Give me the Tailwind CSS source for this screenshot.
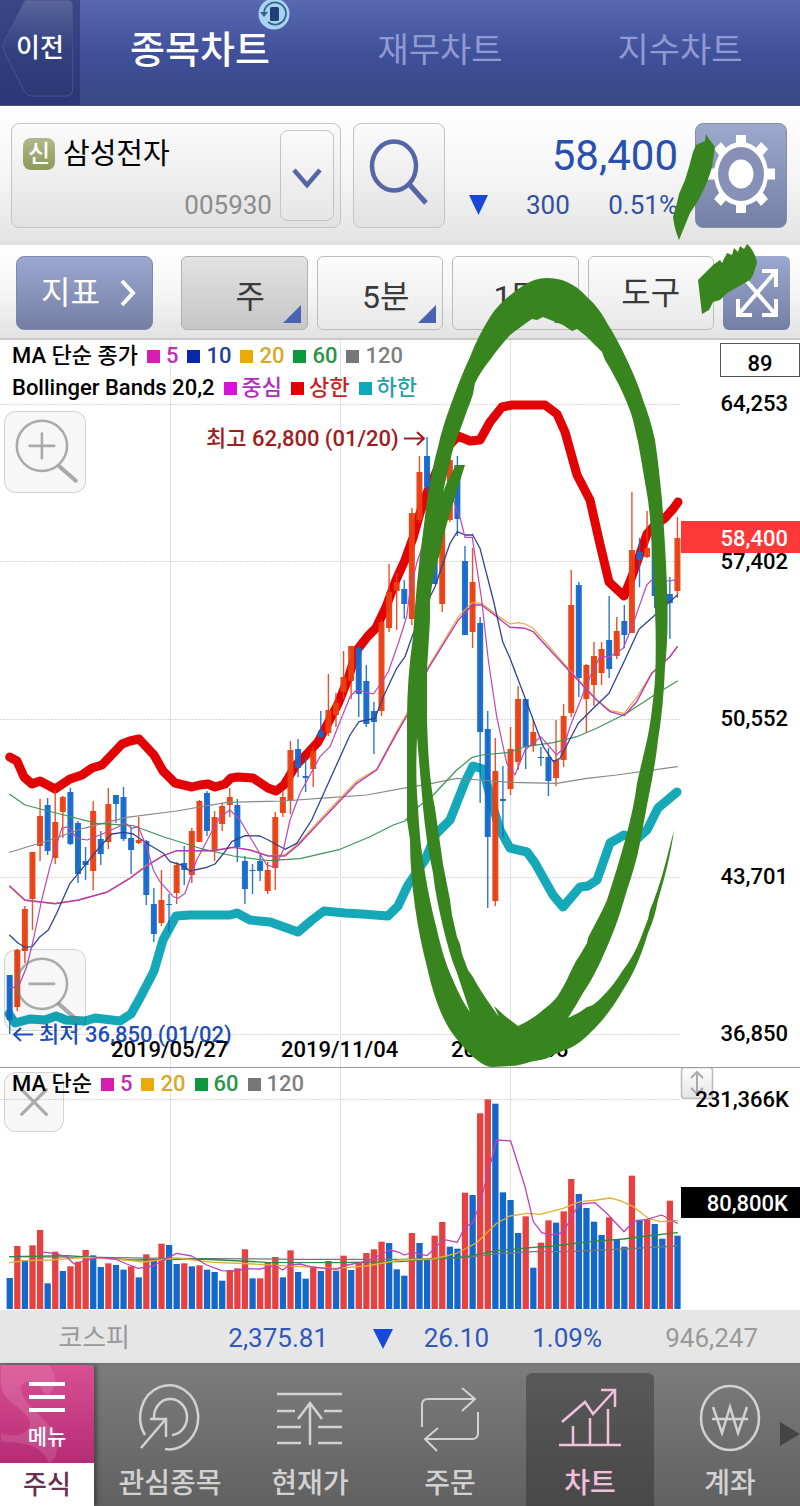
<!DOCTYPE html>
<html lang="ko">
<head>
<meta charset="utf-8">
<meta name="viewport" content="width=device-width, initial-scale=1">
<title>종목차트 - 삼성전자</title>
<script src="https://cdn.jsdelivr.net/npm/@tailwindcss/browser@4"></script>
</head>
<body class="bg-white font-['Roboto','Noto_Sans_CJK_KR',sans-serif] text-black">
<div class="relative w-full overflow-hidden">

  <!-- Top tabs -->
  <header class="flex h-[106px] border-b border-[#4c5674] bg-linear-to-b from-[#5a68b4] via-[#40509a] to-[#384984]">
    <button type="button" class="relative w-20 shrink-0 bg-linear-to-b from-[#3a4785] via-[#303f80] to-[#2b3874] text-white">
      <svg class="absolute inset-0 size-full" viewBox="0 0 80 106" aria-hidden="true">
        <defs><linearGradient id="backFill" x1="0" y1="0" x2="0" y2="1"><stop offset="0" stop-color="#5a659c"/><stop offset=".5" stop-color="#33427f"/><stop offset="1" stop-color="#2b3975"/></linearGradient></defs>
        <path d="M25 0H68Q73 0 73 6V90Q73 97 66 97H32Q27 97 24 92L4 52Q1 46 4 41Z" fill="url(#backFill)" stroke="#46548f" stroke-width="1"/>
      </svg>
      <span class="relative block pb-2 text-[26px] font-medium">이전</span>
    </button>
    <nav class="grid flex-1 grid-cols-3 pb-1">
      <button type="button" class="relative text-[38px] font-medium text-white">종목차트
        <svg class="absolute top-0 left-[178px] size-8" viewBox="0 0 32 32" aria-hidden="true">
          <circle cx="16" cy="14" r="15.5" fill="#a9d4f0"/>
          <path d="M6 13A11 11 0 1 1 10 22" fill="none" stroke="#34618f" stroke-width="1.8"/>
          <path d="M2 12L6 17L10 12Z" fill="#34618f"/>
          <rect x="12" y="7" width="9" height="14" rx="1.5" fill="#223f7c"/>
        </svg>
      </button>
      <button type="button" class="text-[34px] text-[#8f9ad0]">재무차트</button>
      <button type="button" class="text-[34px] text-[#8f9ad0]">지수차트</button>
    </nav>
  </header>

  <!-- Stock selector and price -->
  <section class="flex h-[139px] items-start border-b-4 border-[#e0e0e0] bg-linear-to-b from-white via-[#f6f6f6] to-[#e4e4e4] pt-[17px] pr-[13px] pl-[11px]">
    <div class="flex h-[105px] w-[330px] gap-2 rounded-lg border border-[#c4c4c4] bg-linear-to-b from-[#fbfbfb] to-[#e2e2e2] p-[6px] pl-[11px]">
      <div class="flex flex-1 flex-col justify-between">
        <div class="flex items-center gap-2 pt-1">
          <span class="flex size-8 items-center justify-center rounded-lg bg-linear-to-b from-[#b0b88a] to-[#8c9a58] text-2xl font-medium text-white">신</span>
          <span class="text-[29px] leading-10">삼성전자</span>
        </div>
        <span class="text-right text-[26px] leading-8 text-[#8c8c8c]">005930</span>
      </div>
      <button type="button" aria-label="종목 목록" class="flex w-[54px] items-center justify-center rounded-lg border border-[#c4c4c4] bg-linear-to-b from-[#fafafa] to-[#e6e6e6]">
        <svg class="mt-1 h-6 w-8" viewBox="0 0 32 24" fill="none" stroke="#5565a5" stroke-width="4.500" aria-hidden="true"><path d="M3 4L16 19L29 4"/></svg>
      </button>
    </div>
    <button type="button" aria-label="검색" class="ml-3 flex h-[105px] w-[92px] items-center justify-center rounded-lg border border-[#c4c4c4] bg-linear-to-b from-[#fbfbfb] to-[#e2e2e2]">
      <svg class="mb-2 h-[66px] w-[60px]" viewBox="0 0 60 66" fill="none" stroke="#5565a5" aria-hidden="true"><ellipse cx="25" cy="27" rx="22" ry="24.500" stroke-width="4.500"/><path d="M40 45L57 64" stroke-width="5"/></svg>
    </button>
    <div class="flex flex-1 flex-col pr-[17px] pl-6 text-right text-[#2a50ae]">
      <span class="pt-1 text-[42px] leading-[58px]">58,400</span>
      <div class="flex items-center text-[26px] leading-10 text-[#3050a0]">
        <svg class="h-5 w-[19px]" viewBox="0 0 19 20" aria-hidden="true"><path d="M0 0H19L9.500 20Z" fill="#1848d8"/></svg>
        <span class="pl-[38px]">300</span>
        <span class="flex-1">0.51%</span>
      </div>
    </div>
    <button type="button" aria-label="설정" class="h-[105px] w-[92px] rounded-lg border border-[#858cab] bg-linear-to-b from-[#9ca8cc] to-[#7580a6]">
      <svg class="mx-auto mb-1 h-[80px] w-[70px]" viewBox="-35 -40 70 80" aria-hidden="true">
        <g fill="#fff">
          <rect x="-5" y="-39" width="10" height="78"/>
          <rect x="-34" y="-5.500" width="68" height="11"/>
          <path d="M-27 -25L-20 -32L27 25L20 32Z"/><path d="M27 -25L20 -32L-27 25L-20 32Z"/>
          <ellipse rx="27" ry="32"/>
        </g>
        <ellipse rx="23" ry="27" fill="#8791b7"/>
        <ellipse rx="12.500" ry="14.500" fill="#fff"/>
      </svg>
    </button>
  </section>

  <!-- Chart toolbar -->
  <section class="flex h-[95px] items-start gap-[9px] border-b-2 border-[#c8c8c8] bg-linear-to-b from-white via-[#f6f6f6] to-[#e2e2e2] pt-[11px] pr-[10px] pl-4 text-[32px] text-[#3a3a3a]">
    <button type="button" class="mr-[19px] flex h-[74px] w-[137px] items-center justify-center gap-5 rounded-lg border border-[#7f89b0] bg-linear-to-b from-[#9ba8cf] to-[#757fa5] pl-2 text-white">지표
      <svg class="h-7 w-4" viewBox="0 0 16 28" fill="none" stroke="#fff" stroke-width="4" aria-hidden="true"><path d="M2 2L13 14L2 26"/></svg>
    </button>
    <div class="grid flex-1 grid-cols-4 gap-[9px]">
      <button type="button" class="relative h-[74px] rounded-md border border-[#b0b0b0] bg-linear-to-b from-[#e2e2e2] to-[#c6c6c6] pt-2 pl-3">주
        <svg class="absolute right-[6px] bottom-[6px] size-[18px]" viewBox="0 0 18 18" aria-hidden="true"><path d="M18 0V18H0Z" fill="#4a62b2"/></svg>
      </button>
      <button type="button" class="relative h-[74px] rounded-md border border-[#bcbcbc] bg-linear-to-b from-[#fcfcfc] to-[#e8e8e8] pt-2 pl-3">5분
        <svg class="absolute right-[6px] bottom-[6px] size-[18px]" viewBox="0 0 18 18" aria-hidden="true"><path d="M18 0V18H0Z" fill="#4a62b2"/></svg>
      </button>
      <button type="button" class="relative h-[74px] rounded-md border border-[#bcbcbc] bg-linear-to-b from-[#fcfcfc] to-[#e8e8e8] pt-2 pl-1">1틱
        <svg class="absolute right-[6px] bottom-[6px] size-[18px]" viewBox="0 0 18 18" aria-hidden="true"><path d="M18 0V18H0Z" fill="#4a62b2"/></svg>
      </button>
      <button type="button" class="h-[74px] rounded-md border border-[#bcbcbc] bg-linear-to-b from-[#fcfcfc] to-[#e8e8e8]">도구</button>
    </div>
    <button type="button" aria-label="전체 화면" class="h-[74px] w-[67px] rounded-md bg-linear-to-b from-[#9ba8cf] to-[#757fa5]">
      <svg class="mx-auto h-[50px] w-11" viewBox="0 0 44 50" fill="none" stroke="#fff" stroke-width="4" aria-hidden="true"><path d="M3 3L41 47M41 3L3 47M27 3H41V19M3 31V47H17M27 47H41V31"/></svg>
    </button>
  </section>

  <!-- Price chart -->
  <section class="relative border-b border-[#999999]">
    <svg class="block h-auto w-full" viewBox="0 340 800 727" font-size="22" font-weight="500" role="img" aria-label="주봉 차트">
      <g stroke="#e2e2e2" stroke-width="1"><path d="M170.500 340V1067M340.500 340V1067M510.500 340V1067"/><path d="M0 404.500H681M0 561.500H681M0 719.500H681M0 877.500H681M0 1034.500H681" stroke="#d8d8d8" stroke-dasharray="2 1"/></g>
      <g id="bands"></g>
      <g id="candles"></g>
      <g id="averages"></g>
      <g fill="#a01c20"><text x="206" y="446">최고 62,800 (01/20)</text><path d="M404 438.500H423M417 432L424 438.500L417 445" fill="none" stroke="#a01c20" stroke-width="2"/></g>
      <g fill="#1f4eb4"><text x="39" y="1042">최저 36,850 (01/02)</text><path d="M33 1034.500H15M21 1028L14 1034.500L21 1041" fill="none" stroke="#1f4eb4" stroke-width="2"/></g>
      <text x="111" y="1057">2019/05/27</text><text x="281" y="1057">2019/11/04</text><text x="451" y="1057">2020/04/06</text>
      <rect x="720.500" y="343.500" width="79" height="33" fill="#fff" stroke="#555"/>
      <text x="760" y="371" text-anchor="middle">89</text>
      <g text-anchor="end"><text x="788" y="411">64,253</text><text x="788" y="569">57,402</text><text x="788" y="726">50,552</text><text x="788" y="884">43,701</text><text x="788" y="1041">36,850</text></g>
      <rect x="681" y="521" width="119" height="32" fill="#fc3838"/>
      <text x="788" y="546" text-anchor="end" fill="#fff">58,400</text>
    </svg>
    <div class="absolute top-0 left-3 text-[22px] leading-8 font-medium">
      <div class="flex items-center gap-[9px]">
        <span>MA 단순 종가</span>
        <span class="flex items-center gap-[6px] text-[#c030ac]"><i class="size-[13px] bg-[#d81cb0]"></i>5</span>
        <span class="flex items-center gap-[6px] text-[#24409a]"><i class="size-[13px] bg-[#0828a8]"></i>10</span>
        <span class="flex items-center gap-[6px] text-[#d8a828]"><i class="size-[13px] bg-[#eaaa08]"></i>20</span>
        <span class="flex items-center gap-[6px] text-[#2c9448]"><i class="size-[13px] bg-[#0c983c]"></i>60</span>
        <span class="flex items-center gap-[6px] text-[#808080]"><i class="size-[13px] bg-[#777777]"></i>120</span>
      </div>
      <div class="flex items-center gap-[9px]">
        <span>Bollinger Bands 20,2</span>
        <span class="flex items-center gap-[5px] text-[#b42cc0]"><i class="size-[13px] bg-[#d810e0]"></i>중심</span>
        <span class="flex items-center gap-[5px] text-[#cc2020]"><i class="size-[13px] bg-[#e00000]"></i>상한</span>
        <span class="flex items-center gap-[5px] text-[#28a0ac]"><i class="size-[13px] bg-[#10a8b8]"></i>하한</span>
      </div>
    </div>
    <button type="button" aria-label="확대" class="absolute top-[71px] left-1 size-[82px] rounded-xl border border-black/15 bg-black/[0.03]">
      <svg class="size-full" viewBox="0 0 78 78" fill="none" stroke="#aaaaaa" stroke-width="2.500" stroke-linecap="round" aria-hidden="true"><circle cx="36" cy="33" r="24.500"/><path d="M24 33H48M36 21V45"/><path d="M53 53L69 67" stroke-width="4"/></svg>
    </button>
    <button type="button" aria-label="축소" class="absolute bottom-[36px] left-1 size-[82px] rounded-xl border border-black/15 bg-black/[0.03]">
      <svg class="size-full" viewBox="0 0 78 78" fill="none" stroke="#777777" stroke-opacity=".6" stroke-width="2.500" stroke-linecap="round" aria-hidden="true"><circle cx="36" cy="33" r="24.500"/><path d="M24 33H48"/><path d="M53 53L69 67" stroke-width="4"/></svg>
    </button>
  </section>

  <!-- Volume chart -->
  <section class="relative">
    <svg class="block h-auto w-full" viewBox="0 1068 800 242" font-size="22" font-weight="500" role="img" aria-label="거래량 차트">
      <defs><linearGradient id="grip" x1="0" y1="0" x2="0" y2="1"><stop offset="0" stop-color="#fff"/><stop offset="1" stop-color="#e4e4e4"/></linearGradient></defs>
      <g stroke="#e2e2e2"><path d="M170.500 1068V1309M340.500 1068V1309M510.500 1068V1309"/><path d="M0 1099.500H681" stroke="#d8d8d8" stroke-dasharray="2 1"/></g>
      <g id="volumes"></g>
      <g id="volumeAverages"></g>
      <rect x="681.500" y="1067.500" width="31" height="31" rx="3" fill="url(#grip)" stroke="#bbb" stroke-width="1.500"/>
      <path d="M697 1072V1094M691 1078L697 1072L703 1078M691 1088L697 1094L703 1088" fill="none" stroke="#aaa" stroke-width="2"/>
      <text x="789" y="1107" text-anchor="end">231,366K</text>
      <rect x="681" y="1187" width="119" height="31" fill="#000"/>
      <text x="788" y="1211" text-anchor="end" fill="#fff">80,800K</text>
    </svg>
    <button type="button" aria-label="닫기" class="absolute top-1 left-1 size-[60px] rounded-xl border border-black/15 bg-black/[0.03]">
      <svg class="size-full" viewBox="0 0 56 56" fill="none" stroke="#aaaaaa" stroke-width="3" stroke-linecap="round" aria-hidden="true"><path d="M16 16L40 40M40 16L16 40"/></svg>
    </button>
    <div class="absolute top-0 left-3 flex items-center gap-[9px] text-[22px] leading-8 font-medium">
      <span>MA 단순</span>
      <span class="flex items-center gap-[6px] text-[#c030ac]"><i class="size-[13px] bg-[#d81cb0]"></i>5</span>
      <span class="flex items-center gap-[6px] text-[#d8a828]"><i class="size-[13px] bg-[#eaaa08]"></i>20</span>
      <span class="flex items-center gap-[6px] text-[#2c9448]"><i class="size-[13px] bg-[#0c983c]"></i>60</span>
      <span class="flex items-center gap-[6px] text-[#808080]"><i class="size-[13px] bg-[#777777]"></i>120</span>
    </div>
  </section>

  <!-- Market index -->
  <section class="grid h-[53px] grid-cols-[130fr_198fr_65fr_96fr_113fr_156fr_42fr] items-center bg-[#e6e6e6] pt-1 text-right text-[26px] text-[#3058b8]">
    <span class="text-[#999999]">코스피</span>
    <span>2,375.81</span>
    <svg class="h-5 w-5 justify-self-end" viewBox="0 0 20 20" aria-hidden="true"><path d="M0 0H20L10 20Z" fill="#1848d8"/></svg>
    <span>26.10</span>
    <span>1.09%</span>
    <span class="text-[#999999]">946,247</span>
  </section>

  <!-- Bottom navigation -->
  <nav class="relative flex h-[143px] border-t-2 border-[#747474] bg-linear-to-b from-[#7c7c7c] to-[#616161] text-[28px] font-medium text-[#d2d2d2]">
    <div class="flex w-[94px] shrink-0 flex-col shadow-[3px_0_4px_#00000055]">
      <button type="button" class="relative flex h-[98px] flex-col items-center overflow-hidden rounded-tr-md bg-linear-to-b from-[#d94f94] to-[#b52c76] pt-[15px] text-[21px] text-white">
        <svg class="absolute inset-0 size-full" viewBox="0 0 94 100" aria-hidden="true"><path d="M0 0H48C60 12 57 28 45 31C41 18 28 11 20 22C20 45 55 52 57 83C58 90 55 97 49 100C42 84 30 79 0 78V70C22 76 34 66 28 54C20 42 0 36 0 18Z" fill="#fff" opacity=".12"/></svg>
        <svg class="relative h-[34px] w-[36px]" viewBox="0 0 36 34" stroke="#fff" stroke-width="4" aria-hidden="true"><path d="M0 4H36M0 17H36M0 30H36"/></svg>
        <span class="relative mt-2">메뉴</span>
      </button>
      <button type="button" class="flex-1 bg-white text-[26px] leading-8 text-[#6a3050]">주식</button>
    </div>
    <div class="ml-[6px] grid flex-1 grid-cols-5">
      <button type="button" class="flex flex-col items-center pt-[18px]">
        <svg class="h-[70px] w-[64px]" viewBox="0 0 64 70" fill="none" stroke="currentColor" stroke-width="2.500" aria-hidden="true"><path d="M7 52A29 32 0 1 1 27 66M16 35A16.500 18 0 1 1 34 52M3 65L27 37M12 36H28V54"/></svg>
        <span class="mt-[10px]">관심종목</span>
      </button>
      <button type="button" class="flex flex-col items-center pt-[18px]">
        <svg class="h-[70px] w-[66px]" viewBox="0 0 66 70" fill="none" stroke="currentColor" stroke-width="2.500" aria-hidden="true"><path d="M0 11H65M0 28H18M47 28H65M0 44H24M41 44H65M0 60H24M41 60H65M33 62V21M21 36L33 20L45 36"/></svg>
        <span class="mt-[10px]">현재가</span>
      </button>
      <button type="button" class="flex flex-col items-center pt-[18px]">
        <svg class="h-[70px] w-[60px]" viewBox="0 0 60 70" fill="none" stroke="currentColor" stroke-width="2" aria-hidden="true"><path d="M2 44V22Q2 16 8 16H54M42 5L55 16L42 28M58 29V50Q58 56 52 56H6M18 45L5 56L17 68"/></svg>
        <span class="mt-[10px]">주문</span>
      </button>
      <button type="button" aria-current="page" class="mx-[6px] mt-2 flex flex-col items-center rounded-t-md bg-linear-to-b from-[#595959] to-[#484848] pt-[10px] text-[#f2bfdc]">
        <svg class="h-[70px] w-[64px]" viewBox="0 0 64 70" fill="none" stroke="currentColor" stroke-width="2.500" aria-hidden="true"><path d="M1 62H63M15 61V43M32 61V35M50 61V26M4 39L27 19L35 31L56 8M43 7H57V24"/></svg>
        <span class="mt-[10px]">차트</span>
      </button>
      <button type="button" class="flex flex-col items-center pt-[18px]">
        <svg class="h-[70px] w-[64px]" viewBox="0 0 64 70" fill="none" stroke="currentColor" stroke-width="2.500" aria-hidden="true"><ellipse cx="32" cy="35" rx="29" ry="32"/><path d="M15 24L24 50L32 24L40 50L49 24M14 36H50"/></svg>
        <span class="mt-[10px]">계좌</span>
      </button>
    </div>
    <svg class="absolute top-[57px] right-0 h-6 w-5" viewBox="0 0 20 24" aria-hidden="true"><path d="M0 0L20 12L0 24Z" fill="#444"/></svg>
  </nav>

  <!-- Hand-drawn marker -->
  <svg class="pointer-events-none absolute top-0 left-0 h-auto w-full" viewBox="0 0 800 1506" fill="#38841f" aria-hidden="true">
    <path fill-rule="evenodd" d="M547 278C535 278 526 283 517 290C506 298 497 306 490 317C482 330 475 343 470 357C462 374 456 390 450 407C445 420 441 433 438 447C433 465 430 482 427 500L423 533C418 567 415 602 413 637C409 665 407 692 407 720L407 820L410 840C410 863 412 885 415 907C418 928 422 948 427 967C431 985 436 1002 443 1017C448 1028 454 1036 460 1043C466 1050 471 1056 477 1060C482 1064 487 1067 492 1067L510 1066C517 1066 523 1064 530 1062C538 1060 546 1060 553 1055L570 1048C577 1045 584 1039 590 1033C603 1021 614 1006 623 990C635 972 642 953 648 933C653 922 656 911 658 900C665 877 671 853 674 830C667 857 661 884 650 910L648 919L640 940C636 950 630 961 623 970C617 980 610 989 602 997C597 1002 593 1006 587 1007L580 1012L568 1018C573 1010 578 1002 583 993C594 977 602 959 610 940C617 924 622 907 627 890C632 875 637 859 640 843L648 800C652 780 656 760 658 740C662 716 664 691 665 667C668 640 668 613 667 587C666 558 664 528 662 500C660 480 658 460 655 440C652 426 648 413 643 400C639 386 633 373 627 360C621 347 614 334 607 323C602 313 595 304 587 297C581 290 574 285 567 282C560 279 554 278 547 278Z
      M543 317L537 320L532 319C524 324 517 330 510 335C503 343 496 351 490 360C484 367 479 375 475 383L473 394L470 403L468 408L463 422L460 430C457 438 454 445 452 453L443 492C447 482 451 473 456 465H465C460 481 455 497 450 513C446 526 442 540 440 553C435 569 431 586 430 603V620L427 670V720C428 755 430 785 435 808L442 857L443 864L450 900L452 915L457 937L460 944L462 954L468 970L473 977L478 986L487 1000L499 1017L494 1006L505 1016L518 1026C527 1022 535 1017 543 1010C548 1006 553 1002 557 997C562 989 566 982 570 973L576 961L580 955L587 943L588 938C595 924 602 912 607 900C614 878 621 856 627 833C631 817 635 800 637 783L647 740C650 727 653 704 655 680C656 657 656 634 655 610C654 579 652 548 650 517L648 500L640 453L638 442L633 420C630 409 625 398 620 387L611 370L605 360L602 352L593 343L586 336L577 329L572 331L563 325Z
      M417 737C416 762 416 786 418 807C419 829 421 851 425 873C428 892 432 911 437 930C441 948 446 965 453 980C458 992 464 1004 470 1012L457 973C451 959 447 943 443 927C439 909 435 892 433 873C428 851 425 829 423 807Z"/>
    <path d="M706 134L709 139L715 147L712 167C709 178 705 188 700 197L696 204L690 213L679 240C676 233 674 225 673 217L677 203L679 194L685 180L689 167L693 152L696 145L705 141Z"/>
    <path d="M698 280L713 265L720 260L722 263L727 253L732 255L734 248L738 252L740 246L744 249L747 244C753 249 756 257 757 263L753 275L750 280L727 293L720 300L713 302L709 310L702 314Z"/>
  </svg>
</div>

<script>
const STEP = 7.588, LEFT = 9.7;
const RISE = '#e93f12', FALL = '#1468cc';
const put = (id, html) => { document.getElementById(id).innerHTML = html; };

// Trace values are stored at three units per chart pixel, relative to an origin.
const trace = (...parts) => parts.map(([ox, oy, s]) =>
  s.split(' ').map(p => { const [x, y] = p.split(','); return (ox + x / 3).toFixed(1) + ',' + (oy + y / 3).toFixed(1); }).join(' ')).join(' ');
const line = (pts, color, width) => `<polyline points="${pts}" fill="none" stroke="${color}" stroke-width="${width}" stroke-linejoin="round" stroke-linecap="round"/>`;

const upper = '9.7,757 17,761 24,777 32,784 40,781 55,789 70,779 82,775 92,768 102,765 122,744 130,741 139,739 154,755 163,771 175,783 192,787 200,785 208,784 215,787 225,784 231,778 238,777 253,778 268,788 276,791 284,785 296,765 306,755 318,742 328,723 338,704 348,679 357,650 368,636 376,628 386,607 396,580 405,560 413,538 420,513 427,493 437,470 445,450 458,436 470,441 480,440 490,422 502,407 512,405 545,405 557,414 565,432 577,475 590,500 599,540 609,582 624,596 631,579 647,534 655,525 665,518 673,509 678,502';
const lower = '9,1014 15,1023 30,1019 45,1020 56,1016 66,1020 85,1021 95,1018 120,1021 131,1014 140,998 154,971 163,940 176,916 190,915 230,915 237,913 250,920 270,922 298,932 312,920 324,911 345,913 362,914 388,916 398,906 408,885 425,860 436,834 450,820 465,782 473,766 483,769 493,807 500,830 510,848 527,852 535,863 553,895 563,907 580,887 588,886 597,880 610,843 624,835 637,839 647,830 658,808 677,792';
put('bands', line(upper, '#e20404', 9) + line(lower, '#14a8b8', 9));

// Candles: direction, high, body top, body bottom, low
const candles = `d 975 975 1020 1034|u 949 950 1007 1011|u 906 909 951 963|u 852 852 899 930|u 799 816 846 861|d 798 805 851 855|u 790 822 858 864|u 796 797 812 838|d 788 792 844 845|d 821 823 874 883|d 847 861 865 880|u 801 811 871 890|d 831 839 854 865|u 788 804 842 849|d 795 795 804 823|d 787 797 839 841|d 827 838 850 874|u 817 840 843 844|d 840 841 895 905|d 888 904 934 942|u 870 900 923 926|d 894 904 905 932|u 862 865 893 904|d 846 863 870 885|u 828 831 875 883|u 800 801 842 842|d 791 793 831 836|u 811 817 851 861|u 803 806 824 831|u 788 797 805 817|d 799 805 847 862|d 856 861 889 904|d 864 870 871 894|d 854 861 871 881|u 862 870 891 894|u 812 817 868 890|u 790 797 813 817|u 741 750 801 814|d 739 749 768 777|d 757 776 778 792|u 747 751 769 787|d 711 731 737 738|u 674 710 733 736|u 693 703 715 727|u 651 677 692 699|u 646 646 681 699|d 646 648 694 717|d 665 681 724 727|d 702 711 722 754|u 620 622 711 716|u 564 592 628 632|u 573 582 591 630|d 580 589 604 619|u 508 513 619 625|u 456 472 520 523|d 437 456 487 493|d 510 530 584 584|u 490 500 604 612|u 456 460 520 522|d 456 465 519 536|d 546 561 635 635|u 548 582 632 648|d 617 623 732 803|d 711 729 837 908|u 738 771 901 906|d 766 799 801 837|u 727 749 789 795|u 686 699 762 770|d 699 699 747 769|u 720 732 746 752|d 747 757 758 766|d 748 757 781 796|u 720 760 778 786|u 704 716 760 767|u 570 605 713 717|d 582 585 678 697|u 664 665 699 733|u 642 656 685 706|u 642 649 673 685|d 596 640 669 678|u 617 631 656 659|d 605 621 635 648|u 492 550 633 633|d 538 552 560 587|u 511 548 557 558|d 525 532 596 608|d 560 575 598 604|d 577 594 603 639|u 517 538 591 598`;
put('candles', candles.split('|').map((c, i) => {
  const [dir, h, t, b, l] = c.split(' ');
  const x = LEFT + STEP * i, fill = dir === 'u' ? RISE : FALL;
  return `<path d="M${x} ${h}V${l}" stroke="${fill}" stroke-width="1.4" opacity=".9"/><rect x="${x - 3}" y="${t}" width="6" height="${Math.max(1, b - t)}" fill="${fill}" opacity=".95"/>`;
}).join(''));

const ma5 = trace([0,760,'29,683 42,682 60,670 80,620 100,540 125,420 150,320 185,205 205,200 230,235 262,240 300,225 355,200 375,188 395,205 415,200 440,260 460,330 480,365 520,410 535,415 555,400 590,300 630,225 660,170 690,150 720,180 770,265 800,315 825,322 850,270'],
  [250,420,'120,1200 150,1120 210,1010 240,980 300,830 320,810 370,822 400,780 415,755 445,670 470,590 480,510 500,430 520,370 540,290 575,230 610,240 632,300 645,352 667,352'],
  [410,500,'187,113 215,300 235,480 260,650 290,790 315,825 345,750 392,710 440,765 460,745 480,680 520,580 540,530 570,470 600,470 640,445 670,370 710,255 725,240 780,243 802,238']);
const ma10 = trace([0,760,'29,526 55,550 75,562 97,560 120,530 145,510 170,460 185,425 210,370 235,340 300,260 335,222 370,217 400,222 440,250 490,280 510,305 545,315 570,333 620,322 645,312 675,275 695,245 735,227 780,228 805,240 855,268 890,250'],
  [250,420,'185,1200 300,945 327,905 350,900 375,895 400,830 440,745 465,710 490,640 540,530 555,500 600,370 622,335 645,345 667,345'],
  [410,500,'187,103 210,145 250,300 278,425 300,475 340,580 400,740 430,785 450,775 505,670 550,625 597,580 640,490 687,388 735,345 802,285']);
const mid = trace([0,760,'29,378 75,420 165,431 235,420 320,397 390,355 440,318 490,287 530,272 640,272 700,262 750,270 805,288 855,288 895,255'],
  [250,420,'215,1200 320,1090 380,1050 440,940 475,880 535,745 625,600 667,555'],
  [410,500,'187,315 215,315 260,350 300,382 345,385 370,395 420,450 480,515 560,600 600,635 642,647 680,605 725,520 780,470 802,440']);
const ma20 = trace([0,760,'29,380 75,422 165,430 235,421 320,396 390,353 440,316 490,287 530,272 640,272 700,262 750,270 805,288 855,284 895,250'],
  [250,420,'215,1193 320,1083 380,1047 440,934 475,872 535,740 625,590 667,547'],
  [410,500,'187,308 215,310 260,345 300,372 325,368 345,372 370,385 420,442 480,512 560,600 600,631 642,640 680,592 725,520 780,470 802,440']);
const ma60 = trace([0,760,'29,103 75,135 180,162 290,190 400,197 490,230 600,265 700,288 805,302 900,296 1020,268 1110,230 1180,195 1215,183'],
  [410,500,'15,928 70,885 140,810 187,772 215,765 300,757 345,740 430,728 500,710 560,685 650,640 725,590 802,543']);
const ma120 = trace([0,760,'29,277 150,240 250,205 380,172 530,153 680,127 805,124'],
  [250,420,'100,1143 240,1133 350,1125 470,1103 530,1093 620,1075 690,1080'],
  [410,500,'300,847 440,850 530,835 620,825 802,800']);
put('averages', line(ma120, '#888', 1.2) + line(ma60, '#3c9658', 1.2) + line(ma20, '#e4aa40', 1.2) + line(mid, '#bb38b4', 1.4) + line(ma10, '#30438e', 1.3) + line(ma5, '#bb48b4', 1.2));

// Weekly volume: direction and bar top
const volumes = 'd654 u558 d600 u556 u510 d670 u575 d633 u619 u605 u570 d586 d621 u610 d615 d629 u619 d652 u583 d600 u551 d555 d612 u610 d619 u616 d629 d636 d662 u630 u625 u568 d655 u655 u609 u591 d652 u571 d636 d656 u619 d633 u603 d632 u587 d630 u607 u579 u568 u545 d549 d628 d647 u519 d549 d600 u527 u486 d560 d566 u398 d405 u160 u118 d131 d397 d420 d519 u469 d623 u548 u481 d488 u454 u357 d402 d444 d485 d525 u472 d537 d560 u347 d479 u478 d492 d536 u422 d527';
put('volumes', volumes.split(' ').map((v, i) => {
  const y = 1060 + v.slice(1) / 3;
  return `<rect x="${LEFT + STEP * i - 3.1}" y="${y}" width="6.3" height="${1309 - y}" fill="${v[0] === 'u' ? '#e64040' : FALL}"/>`;
}).join(''));
const v5 = '120,575 160,580 200,590 222,612 260,600 300,592 345,597 380,612 415,625 460,618 490,600 530,580 575,588 620,615 665,632 710,633 735,626 780,627 825,616 848,630 870,615 900,612 940,622 1010,628 1040,615 1100,605 1130,590 1170,570 1200,578 1212,585 1240,577 1280,587 1300,570 1330,538 1372,547 1395,500 1418,490 1440,430 1490,240 1532,243 1575,380 1600,485 1625,518 1650,525 1690,518 1720,460 1740,432 1785,428 1820,460 1872,515 1900,485 1940,478 1985,465 2032,490';
const v20 = '29,608 75,602 150,600 260,592 380,600 430,606 530,594 640,607 760,612 900,620 1000,625 1100,618 1200,600 1300,597 1370,580 1430,548 1490,490 1530,468 1580,460 1620,463 1690,445 1740,425 1790,420 1830,414 1860,422 1900,440 1945,475 1980,485 2032,482';
const v60 = '29,590 200,587 400,600 600,597 800,607 1000,608 1200,605 1400,590 1490,572 1600,562 1660,558 1770,545 1870,537 1940,528 2032,518';
const v120 = '29,590 300,592 500,595 900,598 1200,598 1400,592 1500,580 1600,575 1700,575 1850,568 2032,558';
put('volumeAverages', [[v120,'#777'],[v60,'#2e8a3c'],[v20,'#e0b030'],[v5,'#c040b8']].map(([s, c]) => line(trace([0,1060,s]), c, 1.3)).join(''));
</script>
</body>
</html>
